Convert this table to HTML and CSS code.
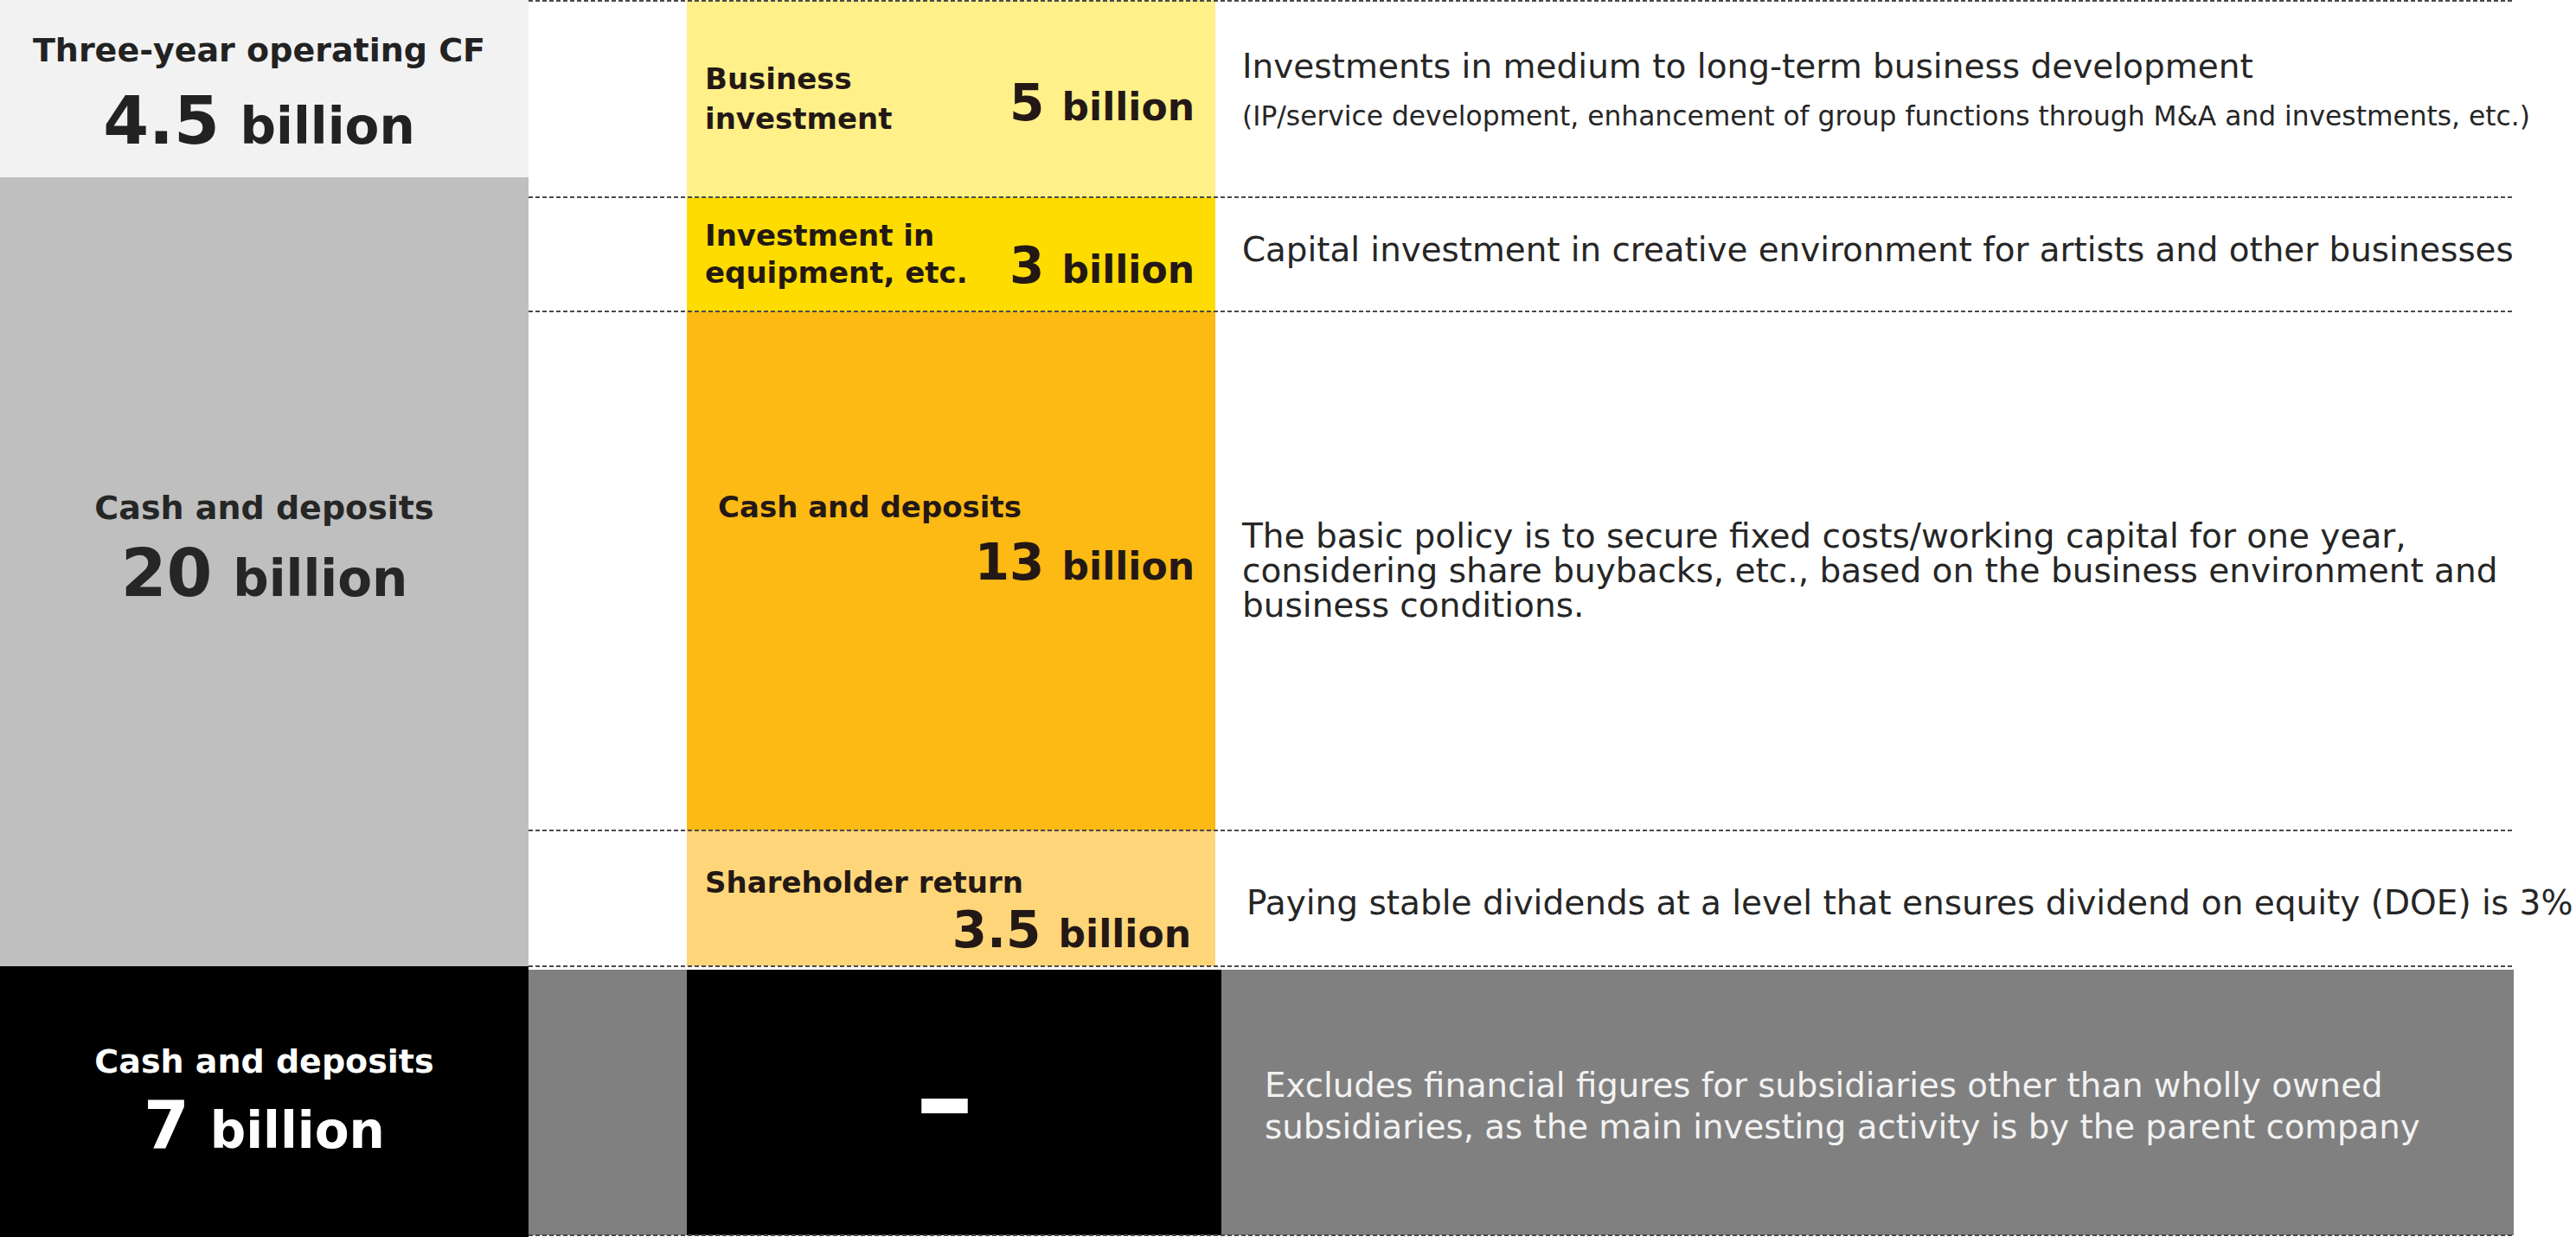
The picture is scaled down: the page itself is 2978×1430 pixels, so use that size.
FILE: index.html
```html
<!DOCTYPE html>
<html lang="en">
<head>
<meta charset="utf-8">
<title>Cash allocation</title>
<link rel="stylesheet" href="styles.css">
</head>
<body>
<div class="chart">
  <div class="left">
    <div class="lcell l-cf">
      <div class="ltitle">Three-year operating CF</div>
      <div class="lvalue"><span class="num">4.5</span> <span class="unit">billion</span></div>
    </div>
    <div class="lcell l-cash">
      <div class="ltitle">Cash and deposits</div>
      <div class="lvalue"><span class="num">20</span> <span class="unit">billion</span></div>
    </div>
    <div class="lcell l-black">
      <div class="ltitle">Cash and deposits</div>
      <div class="lvalue"><span class="num">7</span> <span class="unit">billion</span></div>
    </div>
  </div>
  <div class="right">
    <div class="row r1">
      <div class="spacer"></div>
      <div class="bar bar-inline b1">
        <div class="blabel">Business<br>investment</div>
        <div class="bvalue"><span class="num">5</span> <span class="unit">billion</span></div>
      </div>
      <div class="desc d1">
        <div class="dmain">Investments in medium to long-term business development</div>
        <div class="dsub">(IP/service development, enhancement of group functions through M&amp;A and investments, etc.)</div>
      </div>
    </div>
    <div class="row r2">
      <div class="spacer"></div>
      <div class="bar bar-inline b2">
        <div class="blabel">Investment in<br>equipment, etc.</div>
        <div class="bvalue"><span class="num">3</span> <span class="unit">billion</span></div>
      </div>
      <div class="desc d2">
        <div class="dmain">Capital investment in creative environment for artists and other businesses</div>
      </div>
    </div>
    <div class="row r3">
      <div class="spacer"></div>
      <div class="bar bar-stack b3">
        <div class="blabel">Cash and deposits</div>
        <div class="bvalue"><span class="num">13</span> <span class="unit">billion</span></div>
      </div>
      <div class="desc d3">
        <div class="dpara">The basic policy is to secure fixed costs/working capital for one year,<br>considering share buybacks, etc., based on the business environment and<br>business conditions.</div>
      </div>
    </div>
    <div class="row r4">
      <div class="spacer"></div>
      <div class="bar bar-stack b4">
        <div class="blabel">Shareholder return</div>
        <div class="bvalue"><span class="num">3.5</span> <span class="unit">billion</span></div>
      </div>
      <div class="desc d4">
        <div class="dmain">Paying stable dividends at a level that ensures dividend on equity (DOE) is 3%</div>
      </div>
    </div>
    <div class="row r5">
      <div class="spacer gray"></div>
      <div class="bar b5"><span class="dash">–</span></div>
      <div class="desc d5">
        <div class="dpara light">Excludes financial figures for subsidiaries other than wholly owned<br>subsidiaries, as the main investing activity is by the parent company</div>
      </div>
    </div>
  </div>
</div>
</body>
</html>
```
FILE: styles.css
```css
html, body {
  margin: 0;
  padding: 0;
  background: #ffffff;
}
body {
  width: 2978px;
  height: 1430px;
  overflow: hidden;
  font-family: "DejaVu Sans", Verdana, sans-serif;
  color: #262626;
}
.chart {
  display: flex;
  height: 1430px;
}
/* left column */
.left {
  width: 611px;
  flex: none;
  display: flex;
  flex-direction: column;
}
.lcell {
  display: flex;
  flex-direction: column;
  align-items: center;
  justify-content: center;
  gap: 14px;
  font-weight: bold;
  box-sizing: border-box;
}
.ltitle {
  font-size: 38px;
  line-height: 44px;
  white-space: nowrap;
}
.lvalue {
  font-size: 68px;
  line-height: 80px;
  white-space: nowrap;
}
.lvalue .num { font-size: 76px; }
.lvalue .unit { font-size: 58px; }
.l-cf {
  height: 205px;
  background: #f2f2f2;
  gap: 20px;
  padding-top: 16px;
  padding-right: 12px;
  color: #222222;
}
.l-cash {
  height: 912px;
  background: #bfbfbf;
  padding-bottom: 48px;
  color: #262626;
}
.l-black {
  height: 313px;
  background: #000000;
  color: #ffffff;
  gap: 12px;
  padding-top: 4px;
}
/* right area */
.right {
  width: 2295px;
  flex: none;
  display: flex;
  flex-direction: column;
}
.row {
  display: grid;
  grid-template-columns: 183px 611px 1fr;
  position: relative;
}
.row::before {
  content: "";
  position: absolute;
  left: 0;
  right: 0;
  top: -1px;
  height: 2px;
  background: repeating-linear-gradient(90deg, #4a4a4a 0 5px, transparent 5px 8px);
  z-index: 2;
}
.r1 { height: 228px; }
.r1::before { top: 0; }
.r2 { height: 132px; }
.r3 { height: 600px; }
.r4 { height: 157px; }
.r5 {
  height: 313px;
  grid-template-columns: 183px 618px 1fr;
  padding-top: 4px;
  padding-bottom: 2px;
  box-sizing: border-box;
}
.r5::after {
  content: "";
  position: absolute;
  left: 0;
  right: 0;
  bottom: 1px;
  height: 2px;
  background: repeating-linear-gradient(90deg, #4a4a4a 0 5px, transparent 5px 8px);
}
.spacer.gray { background: #808080; }
/* bars */
.bar {
  box-sizing: border-box;
  color: #231815;
  font-weight: bold;
}
.blabel {
  font-size: 34px;
  line-height: 44px;
  white-space: nowrap;
}
.bvalue {
  font-size: 58px;
  white-space: nowrap;
  line-height: 64px;
}
.bvalue .num { font-size: 58px; }
.bvalue .unit { font-size: 44px; }
.bar-inline {
  display: flex;
  align-items: flex-end;
  justify-content: space-between;
  align-content: center;
  flex-wrap: wrap;
  padding: 0 24px 0 21px;
}
.b1 {
  background: #fff08a;
}
.b1 .blabel { line-height: 46px; }
.b1 .bvalue { padding-bottom: 4px; }
.b2 {
  background: #ffdc00;
}
.b2 .blabel { line-height: 43px; }
.b2 .bvalue { margin-bottom: -7px; }
.bar-stack {
  display: flex;
  flex-direction: column;
  justify-content: center;
  padding: 0 24px 0 21px;
}
.bar-stack .bvalue { text-align: right; }
.b3 {
  background: #fdb914;
  padding-left: 36px;
  padding-bottom: 68px;
  gap: 12px;
}
.b3 .blabel { line-height: 40px; }
.b4 {
  background: #fed679;
  padding-top: 34px;
  gap: 4px;
}
.b4 .blabel { line-height: 40px; }
.b4 .bvalue { line-height: 62px; padding-right: 4px; }
.b5 {
  background: #000000;
  display: flex;
  align-items: center;
  justify-content: center;
  padding-right: 22px;
  padding-bottom: 12px;
}
.dash {
  color: #ffffff;
  font-size: 136px;
  line-height: 1;
  font-weight: bold;
}
/* descriptions */
.desc {
  display: flex;
  flex-direction: column;
  justify-content: center;
  padding-left: 31px;
  box-sizing: border-box;
  color: #262626;
}
.dmain {
  font-size: 39px;
  line-height: 46px;
  white-space: nowrap;
}
.dsub {
  font-size: 31.3px;
  line-height: 40px;
  margin-top: 14px;
  white-space: nowrap;
}
.d1 { padding-bottom: 20px; }
.d2 { padding-bottom: 10px; }
.d2 .dmain { font-size: 38.8px; }
.dpara {
  font-size: 39px;
  line-height: 40px;
  white-space: nowrap;
}
.d4 { padding-left: 36px; padding-top: 10px; }
.d5 {
  background: #808080;
  padding-left: 50px;
  padding-top: 8px;
}
.dpara.light {
  font-size: 38.7px;
  color: #f2f2f2;
  line-height: 48px;
}
```
